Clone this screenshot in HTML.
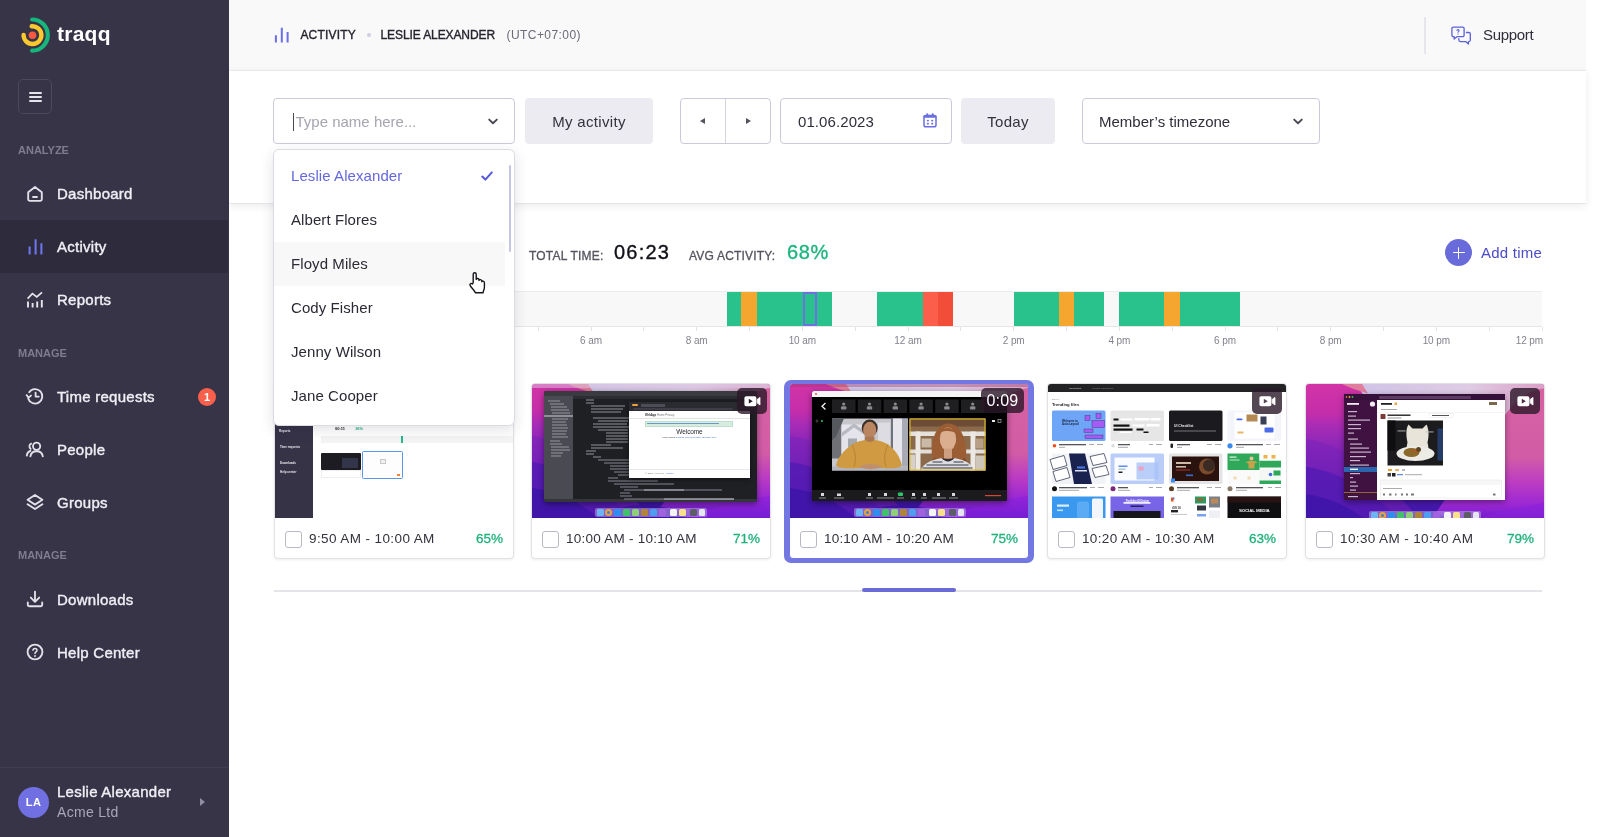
<!DOCTYPE html>
<html lang="en">
<head>
<meta charset="utf-8">
<title>Traqq – Activity</title>
<style>
*{box-sizing:border-box;margin:0;padding:0}
html,body{width:1600px;height:837px;overflow:hidden;background:#fff}
body{font-family:"Liberation Sans",Arial,sans-serif;color:#2b2a35;position:relative;will-change:transform}
.abs{position:absolute}
/* sidebar */
#sb{position:absolute;left:0;top:0;width:229px;height:837px;background:#373448}
#sb .logo-t{position:absolute;left:57px;top:22px;font-size:21px;font-weight:700;color:#fff;line-height:24px;letter-spacing:.25px}
#sb .ham{position:absolute;left:18px;top:79px;width:34px;height:35px;border:1px solid #4c495d;border-radius:5px}
#sb .ham i{position:absolute;left:9.500px;width:13.500px;height:2px;background:#e4e3ea;border-radius:1px}
#sb .sec{position:absolute;left:18px;font-size:11px;font-weight:700;color:#7f7d8d;letter-spacing:0;line-height:14px}
#sb .it{position:absolute;left:0;width:229px;height:53px}
#sb .it.act{background:#2e2b3c;width:228px}
#sb .it span{position:absolute;left:57px;top:17px;font-size:15px;line-height:19px;color:#efeef4;letter-spacing:.26px;-webkit-text-stroke:.4px #efeef4}
#sb .it svg{position:absolute;left:25px;top:16px;width:20px;height:20px}
#sb .badge{position:absolute;left:198px;top:18px;width:18px;height:18px;border-radius:9px;background:#f9604c;color:#fff;font-size:11px;font-weight:700;text-align:center;line-height:18px}
#sb .user{position:absolute;left:0;top:767px;width:229px;height:70px;border-top:1px solid #403d52}
#sb .av{position:absolute;left:18px;top:19px;width:31px;height:31px;border-radius:16px;background:#7170e2;color:#fff;font-size:11px;font-weight:700;text-align:center;line-height:31px;letter-spacing:.3px}
/* topbar */
#tb{position:absolute;left:229px;top:0;width:1357px;height:71px;background:#f9f9f9;border-bottom:1px solid #ededf0}
#tb .bc{position:absolute;top:28px;font-size:12px;line-height:15px;font-weight:400;-webkit-text-stroke:.35px #24232e;color:#24232e;letter-spacing:.2px;white-space:nowrap}
/* filter panel */
#fp{position:absolute;left:229px;top:71px;width:1357px;height:133px;background:#fff;border-bottom:1px solid #e6e6ea;box-shadow:0 2px 8px rgba(40,40,60,.09)}
.ctl{position:absolute;top:98px;height:46px;border-radius:4px;font-size:15px;line-height:48px;white-space:nowrap;letter-spacing:0}
.ctl.in{border:1px solid #cbcada;background:#fff;line-height:46px}
.ctl.btn{background:#ecebf1;color:#33323d;text-align:center;letter-spacing:.34px}
/* dropdown */
#dd{position:absolute;left:273px;top:149px;width:242px;height:277px;background:#fff;border:1px solid #dcdbe3;border-radius:6px;box-shadow:0 4px 14px rgba(30,30,60,.13)}
#dd .o{position:absolute;left:0;width:231px;height:44px;font-size:15px;line-height:44px;padding-left:17px;color:#2b2a35;letter-spacing:.08px}
#dd .o.h{background:#f8f8f8}
#dd .o.s{color:#6468dc}
/* stats */
.st-l{position:absolute;font-size:12px;line-height:14px;color:#55545f;letter-spacing:.2px;white-space:nowrap;-webkit-text-stroke:.3px #55545f}
.st-v{position:absolute;font-size:20px;line-height:24px;white-space:nowrap;letter-spacing:.3px;-webkit-text-stroke:.35px}
/* timeline */
#tl{position:absolute;left:274px;top:291px;width:1268px;height:36px;background:#f8f8f8;border-top:1px solid #ececec;border-bottom:1px solid #e6e6e6}
#tl b{position:absolute;top:0;height:34px;display:block}
.g{background:#2ac28c}.y{background:#f5a62e}.r{background:#fb5f4b}.r2{background:#f24d38}
.tk{position:absolute;top:327px;width:1px;height:4px;background:#e3e3e3}
.tlb{position:absolute;top:334px;font-size:10px;line-height:13px;letter-spacing:-.1px;color:#83828c;white-space:nowrap;width:60px;margin-left:-30px;text-align:center}
/* cards */
.cd{position:absolute;top:383px;width:240px;height:176px;background:#fff;border:1px solid #e2e2e6;border-radius:4px;box-shadow:0 1px 3px rgba(0,0,0,.08);overflow:hidden}
.cd .im{position:absolute;left:0;top:0;width:238px;height:134px;overflow:hidden}
.cd .cb{position:absolute;left:10px;top:147px;width:17px;height:17px;border:1.5px solid #b9b8c4;border-radius:3px;background:#fff}
.cd .tm{position:absolute;left:34px;top:146px;font-size:13.5px;line-height:18px;color:#33323d;letter-spacing:.2px;white-space:nowrap}
.cd .pc{position:absolute;right:10px;top:146px;font-size:13.5px;line-height:18px;color:#1fb27b;font-weight:400;letter-spacing:0;-webkit-text-stroke:.3px #1fb27b}
.cd .vid{position:absolute;right:4px;top:4px;width:30px;height:25px;border-radius:5px;background:rgba(45,25,45,.78)}
</style>
</head>
<body>
<div id="sb">
  <svg class="abs" style="left:16px;top:14px" width="36" height="42" viewBox="0 0 36 42">
    <path d="M16.2 5.500 A15.6 15.6 0 0 1 16.2 36.700" fill="none" stroke="#16b67c" stroke-width="4.2" stroke-linecap="round"/>
    <path d="M15.7 12.240 A8.9 8.9 0 1 1 7.600 20.900" fill="none" stroke="#fbc92d" stroke-width="4.4" stroke-linecap="round"/>
    <circle cx="16.5" cy="21.2" r="3.8" fill="#f9593f"/>
  </svg>
  <div class="logo-t">traqq</div>
  <div class="ham"><i style="top:12px"></i><i style="top:16px"></i><i style="top:20px"></i></div>

  <div class="sec" style="top:143px">ANALYZE</div>
  <div class="it" style="top:167px">
    <svg style="top:17px" viewBox="0 0 20 20" fill="none" stroke="#e2e1ea" stroke-width="1.85" stroke-linejoin="round" stroke-linecap="round"><path d="M3.2 8.2 L10 3 L16.8 8.2 V15.2 A1.6 1.6 0 0 1 15.2 16.8 H4.8 A1.6 1.6 0 0 1 3.2 15.2 Z"/><path d="M8 13 H12" stroke-width="1.8"/></svg>
    <span>Dashboard</span></div>
  <div class="it act" style="top:220px">
    <svg viewBox="0 0 20 20" fill="none" stroke="#6e78f0" stroke-width="2" stroke-linecap="butt"><path d="M4.6 10.4 V18.5 M10.6 3.3 V18.5 M16.400 7.3 V18.5"/></svg>
    <span>Activity</span></div>
  <div class="it" style="top:273px">
    <svg viewBox="0 0 20 20" fill="none" stroke="#e6e5ee" stroke-width="1.7" stroke-linecap="butt" stroke-linejoin="miter"><path d="M3 12.5 V18.5 M7.6 14 V18.5 M12.2 12.5 V18.5 M16.8 11 V18.5" stroke-width="1.9"/><path d="M2.6 9.6 L7.4 4.6 L11.8 8 L17 3.4"/></svg>
    <span>Reports</span></div>

  <div class="sec" style="top:346px">MANAGE</div>
  <div class="it" style="top:370px">
    <svg viewBox="0 0 20 20" fill="none" stroke="#e2e1ea" stroke-width="1.85" stroke-linecap="round" stroke-linejoin="round"><path d="M4.2 6.2 A7.2 7.2 0 1 1 3.2 12.4"/><path d="M1.6 9.2 L3.6 11.6 L6 9.6"/><path d="M10.6 6.6 V10.6 H13.8"/></svg>
    <span>Time requests</span><div class="badge">1</div></div>
  <div class="it" style="top:423px">
    <svg viewBox="0 0 20 20" fill="none" stroke="#e2e1ea" stroke-width="1.85" stroke-linecap="round" stroke-linejoin="round"><circle cx="11.6" cy="7.2" r="3.6"/><path d="M5.4 17.4 C6 13.6 8.6 12.2 11.6 12.2 C14.6 12.2 17.2 13.6 17.8 17.4"/><path d="M6.2 4.6 C4.2 5.4 3.8 8.2 5.6 9.8 M1.8 16.6 C2 14 3.4 12.4 5.4 11.8"/></svg>
    <span>People</span></div>
  <div class="it" style="top:476px">
    <svg viewBox="0 0 20 20" fill="none" stroke="#e2e1ea" stroke-width="1.85" stroke-linecap="round" stroke-linejoin="round"><path d="M10 3 L17.4 7.8 L10 12.6 L2.6 7.8 Z"/><path d="M2.6 12.2 L10 17 L17.4 12.2"/></svg>
    <span>Groups</span></div>

  <div class="sec" style="top:548px">MANAGE</div>
  <div class="it" style="top:573px">
    <svg viewBox="0 0 20 20" fill="none" stroke="#e2e1ea" stroke-width="1.85" stroke-linecap="round" stroke-linejoin="round"><path d="M10 2.6 V12.6 M5.8 8.6 L10 12.8 L14.2 8.6"/><path d="M2.8 13.4 V15.4 A1.8 1.8 0 0 0 4.6 17.2 H15.4 A1.8 1.8 0 0 0 17.2 15.4 V13.4"/></svg>
    <span>Downloads</span></div>
  <div class="it" style="top:626px">
    <svg viewBox="0 0 20 20" fill="none" stroke="#e2e1ea" stroke-width="1.85" stroke-linecap="round" stroke-linejoin="round"><circle cx="10" cy="10" r="7.4"/><path d="M8 8.2 C8 5.8 12 5.8 12 8.2 C12 9.8 10 9.8 10 11.4" stroke-width="1.5"/><path d="M10 13.9 V14" stroke-width="1.9"/></svg>
    <span>Help Center</span></div>

  <div class="user">
    <div class="av">LA</div>
    <div class="abs" style="left:57px;top:14px;font-size:15px;line-height:19px;color:#efeef4;letter-spacing:.26px;-webkit-text-stroke:.4px #efeef4;white-space:nowrap">Leslie Alexander</div>
    <div class="abs" style="left:57px;top:35px;font-size:14px;line-height:18px;color:#a9a7b8;letter-spacing:.3px;white-space:nowrap">Acme Ltd</div>
    <div class="abs" style="left:200px;top:30px;width:0;height:0;border-left:5px solid #8f8da2;border-top:4px solid transparent;border-bottom:4px solid transparent"></div>
  </div>
</div>

<div id="tb">
  <svg class="abs" style="left:44px;top:26px" width="18" height="19" viewBox="0 0 18 19" fill="none" stroke="#6a6fe6" stroke-width="2"><path d="M2.9 9.2 V16.6 M8.8 1.7 V16.6 M14.6 6 V16.6"/></svg>
  <div class="bc" style="left:71.400px">ACTIVITY</div>
  <div class="abs" style="left:138px;top:33px;width:4px;height:4px;border-radius:2px;background:#cfd0e2"></div>
  <div class="bc" style="left:151.500px;letter-spacing:-.1px">LESLIE ALEXANDER</div>
  <div class="bc" style="left:277.500px;-webkit-text-stroke:0;color:#6a6975;letter-spacing:.43px">(UTC+07:00)</div>
  <div class="abs" style="left:1195.300px;top:17px;width:1.600px;height:37px;background:#e6e6ee"></div>
  <svg class="abs" style="left:1221px;top:24.500px" width="22.600" height="20.700" viewBox="0 0 24 22" fill="none" stroke="#5c62dc" stroke-width="1.4" stroke-linejoin="round" stroke-linecap="round">
    <path d="M3.6 2.2 H13.4 A1.6 1.6 0 0 1 15 3.8 V10.8 A1.6 1.6 0 0 1 13.4 12.4 H7.4 L4.4 15 V12.4 H3.6 A1.6 1.6 0 0 1 2 10.8 V3.8 A1.6 1.6 0 0 1 3.6 2.2 Z"/>
    <path d="M17.4 8 H20 A1.6 1.6 0 0 1 21.6 9.6 V16 A1.6 1.6 0 0 1 20 17.600 H19.6 V20.2 L16.6 17.600 H11 A1.6 1.6 0 0 1 9.400 16 V14.6"/>
    <path d="M7.4 5.800 C7.4 4.400 9.700 4.400 9.700 5.800 C9.700 6.700 8.500 6.800 8.500 7.700 M8.500 9.500 V9.600" stroke-width="1.2"/>
  </svg>
  <div class="abs" style="left:1254px;top:26px;font-size:15px;line-height:18px;color:#2f2e3a;letter-spacing:-.3px">Support</div>
</div>

<div id="fp"></div>
<div class="ctl in" style="left:273px;width:242px">
  <div class="abs" style="left:18.500px;top:14px;width:1.500px;height:18px;background:#4a4956"></div>
  <span class="abs" style="left:21.500px;top:0;color:#a6a5b0">Type name here...</span>
  <svg class="abs" style="left:213px;top:18px" width="12" height="9" viewBox="0 0 12 9" fill="none" stroke="#4a4956" stroke-width="1.9" stroke-linecap="round" stroke-linejoin="round"><path d="M2.2 2.600 L6 6.300 L9.800 2.600"/></svg>
</div>
<div class="ctl btn" style="left:525px;width:128px">My activity</div>
<div class="ctl in" style="left:680px;width:91px">
  <div class="abs" style="left:44px;top:0;width:1px;height:44px;background:#d4d3de"></div>
  <div class="abs" style="left:19px;top:19px;width:0;height:0;border-right:5px solid #55545f;border-top:3.500px solid transparent;border-bottom:3.500px solid transparent"></div>
  <div class="abs" style="left:65px;top:19px;width:0;height:0;border-left:5px solid #55545f;border-top:3.500px solid transparent;border-bottom:3.500px solid transparent"></div>
</div>
<div class="ctl in" style="left:780px;width:172px">
  <span class="abs" style="left:17px;top:0;color:#2f2e3a;letter-spacing:.09px">01.06.2023</span>
  <svg class="abs" style="left:141px;top:13px" width="16" height="17" viewBox="0 0 16 17" fill="none" stroke="#6a6ee2" stroke-width="1.5" stroke-linejoin="round" stroke-linecap="round">
    <rect x="2" y="3.400" width="12" height="11.400" rx="1.800"/><path d="M2.400 4.600 H13.600" stroke-width="2.200"/><path d="M5.300 2.300 V3 M10.700 2.300 V3" stroke-width="2"/><path d="M5.700 8.600 h.4 M10 8.600 h.4 M5.700 11.700 h.4 M10 11.700 h.4" stroke-width="1.800"/>
  </svg>
</div>
<div class="ctl btn" style="left:961px;width:94px">Today</div>
<div class="ctl in" style="left:1082px;width:238px">
  <span class="abs" style="left:16px;top:0;color:#2f2e3a">Member’s timezone</span>
  <svg class="abs" style="left:209px;top:18px" width="12" height="9" viewBox="0 0 12 9" fill="none" stroke="#4a4956" stroke-width="1.9" stroke-linecap="round" stroke-linejoin="round"><path d="M2.2 2.600 L6 6.300 L9.800 2.600"/></svg>
</div>

<div class="st-l" style="left:529px;top:249px">TOTAL TIME:</div>
<div class="st-v" style="left:614px;top:240px;color:#111018;letter-spacing:1.2px">06:23</div>
<div class="st-l" style="left:689px;top:249px">AVG ACTIVITY:</div>
<div class="st-v" style="left:787px;top:240px;color:#1db57e;letter-spacing:.6px">68%</div>
<div class="abs" style="left:1445px;top:239px;width:27px;height:27px;border-radius:14px;background:#696bda"><i class="abs" style="left:7.500px;top:12.600px;width:12px;height:1.800px;background:#fff;border-radius:1px"></i><i class="abs" style="left:12.600px;top:7.500px;width:1.800px;height:12px;background:#fff;border-radius:1px"></i></div>
<div class="abs" style="left:1481px;top:243.600px;font-size:15px;line-height:18px;color:#4a4bc7;letter-spacing:.23px;white-space:nowrap">Add time</div>
<div id="tl"><b class="g" style="left:452.5px;width:14.8px"></b><b class="y" style="left:467.3px;width:15.8px"></b><b class="g" style="left:483.1px;width:74.6px"></b><b class="g" style="left:603.4px;width:45.4px"></b><b class="r" style="left:648.8px;width:15.5px"></b><b class="r2" style="left:664.3px;width:14.7px"></b><b class="g" style="left:739.9px;width:45.0px"></b><b class="y" style="left:784.9px;width:15.3px"></b><b class="g" style="left:800.2px;width:29.7px"></b><b class="g" style="left:845.2px;width:45.0px"></b><b class="y" style="left:890.2px;width:15.8px"></b><b class="g" style="left:906.0px;width:60.0px"></b><b style="left:528.5px;width:14.5px;border:2px solid #6f70e2;background:transparent"></b></div>
<i class="tk" style="left:326.3px"></i>
<i class="tk" style="left:379.2px"></i>
<i class="tk" style="left:432.0px"></i>
<i class="tk" style="left:484.8px"></i>
<i class="tk" style="left:537.7px"></i>
<i class="tk" style="left:590.5px"></i>
<i class="tk" style="left:643.3px"></i>
<i class="tk" style="left:696.2px"></i>
<i class="tk" style="left:749.0px"></i>
<i class="tk" style="left:801.8px"></i>
<i class="tk" style="left:854.7px"></i>
<i class="tk" style="left:907.5px"></i>
<i class="tk" style="left:960.3px"></i>
<i class="tk" style="left:1013.2px"></i>
<i class="tk" style="left:1066.0px"></i>
<i class="tk" style="left:1118.8px"></i>
<i class="tk" style="left:1171.7px"></i>
<i class="tk" style="left:1224.5px"></i>
<i class="tk" style="left:1277.3px"></i>
<i class="tk" style="left:1330.2px"></i>
<i class="tk" style="left:1383.0px"></i>
<i class="tk" style="left:1435.8px"></i>
<i class="tk" style="left:1488.7px"></i>
<i class="tk" style="left:1541.5px"></i>
<div class="tlb" style="left:591.0px">6 am</div>
<div class="tlb" style="left:696.7px">8 am</div>
<div class="tlb" style="left:802.3px">10 am</div>
<div class="tlb" style="left:908.0px">12 am</div>
<div class="tlb" style="left:1013.7px">2 pm</div>
<div class="tlb" style="left:1119.3px">4 pm</div>
<div class="tlb" style="left:1225.0px">6 pm</div>
<div class="tlb" style="left:1330.7px">8 pm</div>
<div class="tlb" style="left:1436.3px">10 pm</div>
<div class="tlb" style="left:1483px;margin-left:0;text-align:right">12 pm</div>
<svg width="0" height="0" style="position:absolute">
  <defs>
    <linearGradient id="wpR" x1="0" y1="0" x2="0" y2="1"><stop offset="0" stop-color="#d662a2"/><stop offset=".5" stop-color="#d25ca6"/><stop offset=".68" stop-color="#bd3dc2"/><stop offset=".85" stop-color="#9a27d4"/><stop offset="1" stop-color="#5a18c6"/></linearGradient>
    <linearGradient id="wpL" x1="0" y1="0" x2="0" y2="1"><stop offset="0" stop-color="#d234a6"/><stop offset=".2" stop-color="#c52eaa"/><stop offset=".3" stop-color="#a82cb6"/><stop offset=".42" stop-color="#8f27b8"/><stop offset=".56" stop-color="#7421b8"/><stop offset=".72" stop-color="#591cb4"/><stop offset=".88" stop-color="#4317ac"/><stop offset="1" stop-color="#33119c"/></linearGradient>
    <linearGradient id="wpS" x1="0" y1="0" x2="1" y2="0"><stop offset="0" stop-color="#cfc3e6"/><stop offset=".6" stop-color="#dfcbe4"/><stop offset="1" stop-color="#dba0c6"/></linearGradient>
    <symbol id="wp" viewBox="0 0 238 134" preserveAspectRatio="none">
      <rect width="238" height="134" fill="url(#wpL)"/>
      <path d="M50 0 H238 V40 L60 14 Z" fill="url(#wpS)"/>
      <path d="M36 0 L56 0 L62 9 C52 6 44 4 36 0Z" fill="#e07c9c"/>
      <path d="M238 4 C225 6 214 12 205 22 C190 40 170 70 120 134 H238 Z" fill="url(#wpR)"/>
      <path d="M0 52 C40 58 70 80 120 134 H0 Z" fill="#7a22b8" opacity=".55"/>
      <path d="M0 78 C40 84 70 104 100 134 H0 Z" fill="#4f1ab2" opacity=".7"/>
      <path d="M0 104 C30 108 50 120 66 134 H0 Z" fill="#3c14a6" opacity=".8"/>
      <path d="M60 134 C90 118 130 116 160 134 Z" fill="#3a13a8" opacity=".8"/>
      <path d="M238 112 C210 116 180 124 150 134 H238 Z" fill="#8a22dc" opacity=".6"/>
    </symbol>
    <symbol id="dock" viewBox="0 0 112 9">
      <rect x="0" y="0" width="112" height="9" rx="2" fill="#b9a3e6" opacity=".55"/>
      <rect x="2" y="1" width="7" height="7" rx="1.500" fill="#6db4f2"/><circle cx="13.500" cy="4.500" r="3.500" fill="#e8a33a"/><circle cx="13.500" cy="4.500" r="1.500" fill="#3f7de0"/>
      <rect x="19" y="1" width="7" height="7" rx="1.500" fill="#2f8df0"/><rect x="28" y="1" width="7" height="7" rx="1.500" fill="#3fc26a"/><rect x="37" y="1" width="7" height="7" rx="1.500" fill="#8fcf7a"/>
      <rect x="46" y="1" width="7" height="7" rx="1.500" fill="#b08538"/><rect x="55" y="1" width="7" height="7" rx="1.500" fill="#4f9df0"/><rect x="64" y="1" width="7" height="7" rx="1.500" fill="#a262e0"/>
      <rect x="75" y="1" width="7" height="7" rx="1.500" fill="#f4f4f6"/><rect x="84" y="1" width="7" height="7" rx="1.500" fill="#f7e08a"/>
      <rect x="95" y="1" width="7" height="7" rx="1.500" fill="#5d5d66"/><rect x="104" y="1" width="6" height="7" rx="1.500" fill="#e6e6ee"/>
    </symbol>
    <symbol id="cam" viewBox="0 0 30 26">
      <rect width="30" height="26" rx="5" fill="#2a1828" opacity=".8"/>
      <path d="M9.200 8.200 H17.600 A1.800 1.800 0 0 1 19.400 10 V16.400 A1.800 1.800 0 0 1 17.600 18.200 H9.200 A1.800 1.800 0 0 1 7.400 16.400 V10 A1.800 1.800 0 0 1 9.200 8.200 Z M11.800 10.800 V15.600 L15.800 13.200 Z" fill="#fff" fill-rule="evenodd"/>
      <path d="M20.200 11.400 L23 9.400 V17 L20.200 15 Z" fill="#fff" stroke="#fff" stroke-width=".8" stroke-linejoin="round"/>
    </symbol>
  </defs>
</svg>

<!-- card 1 -->
<div class="cd" style="left:274px">
  <div class="im" style="background:#fff">
    <div class="abs" style="left:0;top:0;width:38px;height:134px;background:#363347"></div>
    <div class="abs" style="left:46px;top:52px;width:192px;height:7px;background:#f4f4f5"></div>
    <div class="abs" style="left:126px;top:52px;width:2px;height:7px;background:#25b78d"></div>
    <div class="abs" style="left:60px;top:42px;font-size:4px;line-height:5px;font-weight:700;color:#222;white-space:nowrap">00:11 <span style="color:#26b584;margin-left:9px">36%</span></div>
    <div class="abs" style="left:4px;top:45px;font-size:3px;line-height:4px;font-weight:700;color:#e8e8ee;white-space:nowrap">Reports</div>
    <div class="abs" style="left:5px;top:61px;font-size:3px;line-height:4px;font-weight:700;color:#e8e8ee;white-space:nowrap">Time requests</div>
    <div class="abs" style="left:5px;top:77px;font-size:3px;line-height:4px;font-weight:700;color:#e8e8ee;white-space:nowrap">Downloads</div>
    <div class="abs" style="left:5px;top:86px;font-size:3px;line-height:4px;font-weight:700;color:#e8e8ee;white-space:nowrap">Help center</div>
    <div class="abs" style="left:46px;top:69px;width:40px;height:17px;background:#1c1c22;border-radius:1px"><i class="abs" style="left:21px;top:5px;width:16px;height:10px;background:#33364a"></i></div>
    <div class="abs" style="left:46px;top:86px;width:40px;height:8px;background:#fff;border:.5px solid #eee"></div>
    <div class="abs" style="left:87px;top:67px;width:41px;height:28px;background:#fdfdfd;border:1px solid #5a97ea;border-radius:1.500px"><i class="abs" style="left:17px;top:7px;width:6px;height:5px;border:.5px solid #c8c8c8;background:#f0f0f0"></i><i class="abs" style="left:34px;top:22px;width:3px;height:1.500px;background:#f0843a"></i></div>
  </div>
  <div class="cb"></div><div class="tm" style="letter-spacing:.4px">9:50 AM - 10:00 AM</div><div class="pc">65%</div>
</div>

<!-- card 2 -->
<div class="cd" style="left:531px">
  <div class="im">
    <svg class="abs" style="left:0;top:0" width="238" height="134"><use href="#wp" width="238" height="134"/></svg>
    <div class="abs" style="left:0;top:0;width:238px;height:4px;background:rgba(220,200,230,.5)"></div>
    <div class="abs" style="left:12px;top:7px;width:213px;height:111px;background:#1f2024;border-radius:2px;box-shadow:0 2px 6px rgba(0,0,0,.45);overflow:hidden">
      <div class="abs" style="left:0;top:0;width:213px;height:5px;background:#3a3b40"></div>
      <div class="abs" style="left:0;top:5px;width:29px;height:104px;background:#4a4b52"></div>
      <div class="abs" style="left:29px;top:5px;width:184px;height:3px;background:#2c2d32"></div>
      <div class="abs" style="left:0;top:108px;width:213px;height:3px;background:#35363b"></div>
      <div class="abs" style="left:0;top:24px;width:29px;height:2px;background:#8d8e96"></div>
      <svg class="abs" style="left:0;top:0" width="213" height="111" fill="none" stroke-width="1" opacity=".75">
        <path d="M4 10h12M6 13h14M7 16h16M7 19h18M8 22h18M8 28h16M8 31h14M8 34h15M8 37h16M8 40h15M8 43h14M8 46h16M6 50h10M6 53h12M7 56h18M7 59h19M7 62h12M7 65h10" stroke="#c9cad2" stroke-width=".8"/>
        <path d="M42 9h8M42 12h8M47 15h34M47 18h32M47 21h30M49 27h36M54 30h30M49 33h34M49 36h36M54 39h30M62 42h22M62 45h22M62 48h22M62 51h22M47 54h20M47 57h32M42 60h10M42 63h8M49 66h8" stroke="#b9bac4"/>
        <path d="M54 69h34M60 72h30M66 75h26M66 78h24M70 81h22M74 84h20M64 87h10M64 90h50M70 93h60M76 96h18M80 99h98M76 102h10M76 105h12M80 108h110" stroke="#a9aab6"/>
        <path d="M100 99h40M120 108h70" stroke="#e6e6ee"/>
      </svg>
    </div>
    <div class="abs" style="left:97px;top:18px;width:121px;height:76px;background:#fff;box-shadow:0 1px 5px rgba(0,0,0,.5);overflow:hidden">
      <div class="abs" style="left:0;top:0;width:121px;height:9px;background:#2a2b30"></div>
      <div class="abs" style="left:3px;top:2px;width:6px;height:2px;background:#e8a13c;border-radius:1px"></div>
      <div class="abs" style="left:12px;top:1.500px;width:24px;height:3px;background:#4d4e55"></div>
      <div class="abs" style="left:4px;top:5.500px;width:100px;height:2.500px;background:#3e3f46;border-radius:1px"></div>
      <div class="abs" style="left:16px;top:11px;font-size:2.800px;line-height:4px;color:#333;white-space:nowrap;font-weight:700">WebApp <span style="font-weight:400;color:#777">Home Privacy</span></div>
      <div class="abs" style="left:0;top:16px;width:121px;height:.5px;background:#e4e4e4"></div>
      <div class="abs" style="left:16px;top:18.500px;width:88px;height:6px;background:#d5ecdf;border:.5px solid #bfe0cd"></div>
      <div class="abs" style="left:18px;top:21px;width:72px;height:1px;background:#4f86c6;opacity:.8"></div>
      <div class="abs" style="left:0;top:25px;width:121px;text-align:center;font-size:6.500px;line-height:9px;color:#2a2a2a;letter-spacing:-.1px">Welcome</div>
      <div class="abs" style="left:0;top:34px;width:121px;text-align:center;font-size:2.400px;line-height:4px;color:#3b6fd0;white-space:nowrap"><span style="color:#333">Learn about</span> building Web apps with ASP.NET Core</div>
      <div class="abs" style="left:0;top:67px;width:121px;height:.5px;background:#e8e8e8"></div>
      <div class="abs" style="left:16px;top:70px;font-size:2.400px;line-height:3px;color:#777;white-space:nowrap">© 2023 - WebApp - <span style="color:#3b6fd0">Privacy</span></div>
    </div>
    <svg class="abs" style="left:63px;top:124px" width="112" height="9"><use href="#dock" width="112" height="9"/></svg>
    <svg class="abs" style="left:205px;top:4px" width="30" height="26"><use href="#cam" width="30" height="26"/></svg>
  </div>
  <div class="cb"></div><div class="tm" style="letter-spacing:.25px">10:00 AM - 10:10 AM</div><div class="pc">71%</div>
</div>
<!-- card 3 (selected) -->
<div class="abs" style="left:784px;top:380px;width:250px;height:183px;border-radius:7px;background:#7277e2"></div>
<div class="cd" style="left:789px;border-color:#7277e2;box-shadow:none;border-radius:4px">
  <div class="im">
    <svg class="abs" style="left:0;top:0" width="238" height="134"><use href="#wp" width="238" height="134"/></svg>
    <div class="abs" style="left:0;top:0;width:238px;height:3px;background:rgba(150,60,110,.4)"></div>
    <div class="abs" style="left:22px;top:7px;width:195px;height:110px;background:#000;border-radius:2px;box-shadow:0 2px 6px rgba(0,0,0,.45);overflow:hidden">
      <div class="abs" style="left:0;top:0;width:195px;height:6px;background:#f4f4f4"></div>
      <div class="abs" style="left:2.500px;top:2px;width:2px;height:2px;border-radius:1px;background:#f0544a"></div>
      <div class="abs" style="left:0;top:99px;width:195px;height:11px;background:#1b1b1d"></div>
      <svg class="abs" style="left:0;top:0" width="195" height="110">
        <path d="M13.500 12 L10 15.200 L13.500 18.400" fill="none" stroke="#f2f2f2" stroke-width="1.300"/>
        <g fill="#1f1f21"><rect x="20" y="8.500" width="23.500" height="13.500"/><rect x="45.800" y="8.500" width="23.500" height="13.500"/><rect x="71.600" y="8.500" width="23.500" height="13.500"/><rect x="97.400" y="8.500" width="23.500" height="13.500"/><rect x="123.200" y="8.500" width="23.500" height="13.500"/><rect x="149" y="8.500" width="23.500" height="13.500"/></g>
        <g fill="#8a8a8e"><circle cx="31.700" cy="13" r="1.600"/><rect x="29" y="15.200" width="5.400" height="3.400" rx="1.200"/><circle cx="57.500" cy="13" r="1.600"/><rect x="54.800" y="15.200" width="5.400" height="3.400" rx="1.200"/><circle cx="83.300" cy="13" r="1.600"/><rect x="80.600" y="15.200" width="5.400" height="3.400" rx="1.200"/><circle cx="109.100" cy="13" r="1.600"/><rect x="106.400" y="15.200" width="5.400" height="3.400" rx="1.200"/><circle cx="134.900" cy="13" r="1.600"/><rect x="132.200" y="15.200" width="5.400" height="3.400" rx="1.200"/><circle cx="160.700" cy="13" r="1.600"/><rect x="158" y="15.200" width="5.400" height="3.400" rx="1.200"/></g>
        <!-- left video -->
        <g transform="translate(20,27.500)">
          <rect width="76" height="52" fill="#c6c6cc"/>
          <rect x="0" y="0" width="9" height="40" fill="#6f7176"/><path d="M0 0 L12 0 L4 18 L0 22Z" fill="#55585c"/>
          <rect x="10" y="6" width="22" height="30" fill="#e4e4ea"/><path d="M10 14 L22 5 L32 12 V16 L22 9 L10 18Z" fill="#b9b9c2"/><rect x="16" y="20" width="9" height="9" fill="#a6a8b0"/>
          <rect x="46" y="4" width="12" height="34" fill="#dcdce2"/>
          <rect x="59" y="0" width="2" height="48" fill="#70727a"/><rect x="61" y="0" width="9" height="48" fill="#e6e6ec"/><rect x="70" y="0" width="6" height="48" fill="#a9abb4"/>
          <rect x="0" y="48" width="76" height="4" fill="#b4b4bc"/>
          <ellipse cx="37.700" cy="9.500" rx="8" ry="8.500" fill="#3a2e28"/>
          <ellipse cx="37.700" cy="11.500" rx="6.600" ry="8.200" fill="#b98661"/>
          <path d="M33 18 H42.500 V24 H33Z" fill="#a97852"/>
          <path d="M4 47 C6 38 12 32 20 26 C25 23 30 22 33 21.500 C36 24 40 24 42.500 21.500 C47 22 52 23.500 56 26 C63 31 68 38 70 47 C66 50.500 58 50 50 49.500 H26 C18 50 8 50.500 4 47Z" fill="#cf9a42"/>
          <path d="M20 26 C24 34 24 42 22 48 M56 26 C52 34 52 42 54 48" stroke="#b5822f" stroke-width="1" fill="none"/>
          <path d="M27 48 C32 44.500 44 44.500 50 48 C45 51.500 32 51.500 27 48Z" fill="#c0906c"/>
        </g>
        <!-- right video -->
        <g transform="translate(97.500,27.500)">
          <rect width="76" height="52" fill="#8b6a4c"/>
          <rect x="0" y="0" width="76" height="8" fill="#6c4c34"/>
          <rect x="0" y="13" width="76" height="4.500" fill="#e4e0dc"/><rect x="0" y="31" width="76" height="4" fill="#e2deda"/>
          <rect x="6" y="13" width="5" height="39" fill="#ece8e4"/><rect x="61" y="13" width="5" height="39" fill="#ece8e4"/>
          <rect x="12" y="20" width="10" height="9" fill="#c9b9a6"/><rect x="66" y="20" width="8" height="10" fill="#b79f86"/><rect x="0" y="36" width="6" height="16" fill="#d6d0c8"/><rect x="66" y="37" width="10" height="15" fill="#cfc6ba"/>
          <path d="M23 44 C20 26 25 5 39 5 C53 5 59 26 56 46 C50 50 30 50 23 44Z" fill="#9a5d34"/>
          <path d="M26 40 C22 44 24 48 28 49 M54 40 C58 44 56 48 52 49" stroke="#7f4726" stroke-width="2" fill="none"/>
          <ellipse cx="38.500" cy="20.500" rx="8.200" ry="11.500" fill="#dcae90"/>
          <path d="M31 14 C33 8 44 8 46.500 15 C42 12 36 12 31 14Z" fill="#9a5d34"/>
          <rect x="34.500" y="30" width="8" height="10" fill="#cf9f82"/>
          <path d="M11 52 C14 44 24 41 32 39.500 C36 43 41 43 45 39.500 C53 41 62 44 65 52Z" fill="#dddde2"/>
          <path d="M13 49.500 H63 M17 46.500 H59 M23 43.500 H33 M44 43.500 H54" stroke="#3a3a44" stroke-width="1.100" fill="none"/>
          <path d="M32 39.500 C36 44 41 44 45 39.500 C41 41 36 41 32 39.500Z" fill="#2e2e36"/>
          <rect x=".5" y=".5" width="75" height="51" fill="none" stroke="#e0bd2a" stroke-width="1.100"/>
        </g>
        <g fill="#d8d8dc"><rect x="9" y="102" width="3" height="3"/><rect x="25" y="102.500" width="4" height="2.500"/><rect x="56" y="102" width="3" height="3"/><rect x="72" y="102" width="3" height="3"/><rect x="100" y="102" width="3" height="3"/><rect x="111" y="102" width="3" height="3"/><rect x="125" y="102" width="3" height="3"/><rect x="140" y="102" width="3" height="3"/></g>
        <rect x="86" y="101.500" width="5" height="3.500" rx="1" fill="#2fc46a"/>
        <g fill="#8c8c92"><rect x="7" y="106.500" width="7" height="1"/><rect x="22" y="106.500" width="10" height="1"/><rect x="54" y="106.500" width="7" height="1"/><rect x="65" y="106.500" width="17" height="1"/><rect x="85" y="106.500" width="7" height="1"/><rect x="99" y="106.500" width="5" height="1"/><rect x="109" y="106.500" width="6" height="1"/><rect x="120" y="106.500" width="14" height="1"/><rect x="137" y="106.500" width="9" height="1"/></g>
        <rect x="173" y="104" width="16" height="1.200" fill="#d8453a"/>
        <rect x="180" y="29" width="3" height="2" fill="#e8e8e8"/><rect x="186" y="28.500" width="3" height="3" fill="none" stroke="#ccc" stroke-width=".6"/>
        <circle cx="10" cy="30" r="1" fill="#2fc46a"/><circle cx="5" cy="30" r="1" fill="none" stroke="#888" stroke-width=".5"/>
      </svg>
    </div>
    <svg class="abs" style="left:64px;top:124px" width="112" height="9"><use href="#dock" width="112" height="9"/></svg>
    <div class="abs" style="left:191px;top:4px;width:43px;height:25px;border-radius:5px;background:rgba(42,24,40,.8);color:#fff;font-size:16px;line-height:26px;text-align:center;letter-spacing:.2px">0:09</div>
  </div>
  <div class="cb"></div><div class="tm">10:10 AM - 10:20 AM</div><div class="pc">75%</div>
</div>

<!-- card 4 -->
<div class="cd" style="left:1047px">
  <div class="im" style="background:#fff">
    <div class="abs" style="left:0;top:0;width:238px;height:8px;background:#232326"></div>
    <div class="abs" style="left:21px;top:3px;font-size:2.500px;line-height:3px;color:#ddd;white-space:nowrap">Community <span style="color:#888;margin-left:10px">Search Community</span></div>
    <div class="abs" style="left:4px;top:14px;font-size:2.200px;line-height:3px;color:#888;white-space:nowrap">Explore</div>
    <div class="abs" style="left:4px;top:18px;font-size:4.200px;line-height:5px;font-weight:700;color:#222;white-space:nowrap">Trending files</div>
    <svg class="abs" style="left:0;top:0" width="238" height="134">
      <!-- row 1 -->
      <g transform="translate(4,26.500)"><rect width="53.500" height="30.500" rx="1.500" fill="#6fa5f6"/><g fill="#a55cf5" stroke="#3a2a6a" stroke-width=".4"><rect x="33" y="5" width="5" height="5"/><rect x="44" y="3" width="5" height="5"/><rect x="40" y="10" width="12.500" height="7"/><rect x="32" y="18.500" width="9" height="3.500"/><rect x="33" y="24.500" width="18" height="3.500"/></g></g>
      <g transform="translate(62.500,26.500)"><rect width="53.500" height="30.500" rx="1.500" fill="#e6e6e7"/><g fill="#111"><rect x="3" y="8" width="5" height="2"/><rect x="3" y="14" width="16" height="2.200"/><rect x="3" y="18" width="19" height="2.200"/><rect x="26" y="18" width="7" height="2"/><rect x="33" y="21" width="5" height="1.500"/></g><g fill="#fff"><rect x="10" y="8" width="12" height="2"/><rect x="24" y="7.500" width="15" height="2.500"/><rect x="40" y="7.500" width="10" height="2.500"/><rect x="22" y="14" width="12" height="2"/><rect x="36" y="13.500" width="13" height="2.500"/><rect x="9" y="21" width="12" height="1.600"/></g></g>
      <g transform="translate(121,26.500)"><rect width="53.500" height="30.500" rx="1.500" fill="#1b1b1f"/><rect x="5" y="20" width="42" height="1" fill="#777"/></g>
      <g transform="translate(179.500,26.500)"><rect width="53.500" height="30.500" rx="1.500" fill="#f3f5fb"/><rect x="7" y="2" width="40" height="26" fill="#fff"/><rect x="19" y="4" width="11" height="7" fill="#b28a52"/><rect x="33" y="6" width="6" height="8" fill="#3a3f55"/><rect x="37" y="17" width="9" height="5" fill="#4a6be8" rx="1"/><rect x="9" y="8" width="6" height="1.800" rx=".9" fill="#4a6be8"/><rect x="10" y="21" width="6" height="2" fill="#e9b56a"/></g>
      <!-- meta 1 -->
      <g fill="#55555c"><rect x="11" y="60" width="27" height="1.300"/><rect x="70" y="60" width="12" height="1.300"/><rect x="129" y="60" width="13" height="1.300"/><rect x="188" y="60" width="27" height="1.300"/></g>
      <g fill="#a8a8ae"><rect x="11" y="62.800" width="6" height="1"/><rect x="70" y="62.800" width="10" height="1"/><rect x="129" y="62.800" width="5" height="1"/><rect x="188" y="62.800" width="8" height="1"/><rect x="41" y="60" width="5" height="1"/><rect x="49" y="60" width="6" height="1"/><rect x="101" y="60" width="4" height="1"/><rect x="108" y="60" width="6" height="1"/><rect x="159" y="60" width="5" height="1"/><rect x="167" y="60" width="6" height="1"/><rect x="218" y="60" width="5" height="1"/><rect x="226" y="60" width="6" height="1"/></g>
      <circle cx="6.500" cy="61.800" r="1.800" fill="#f24e1e"/><circle cx="65" cy="61.800" r="1.800" fill="#ddd"/><rect x="122.500" y="59.500" width="2.500" height="4.500" rx="1" fill="#222"/><circle cx="182" cy="61.800" r="2.600" fill="#3d8bf0"/>
      <!-- row 2 -->
      <g transform="translate(4,69.500)"><rect width="53.500" height="30.500" rx="1.500" fill="#f2f3f7"/><g fill="#fff" stroke="#23283e" stroke-width=".7"><path d="M-2 6 L12 2 L15 12 L1 16Z M1 18 L15 14 L18 24 L4 28Z M38 3 L52 0 L55 9 L41 12Z M40 15 L54 12 L57 21 L43 24Z"/></g><path d="M17 0 H33 L40 30.500 H22Z" fill="#1a2250"/><rect x="25" y="13" width="8" height="2" fill="#4a7be8"/><rect x="23" y="16.500" width="12" height="1.500" fill="#dfe3f5"/></g>
      <g transform="translate(62.500,69.500)"><rect width="53.500" height="30.500" rx="1.500" fill="#b9cdf8"/><rect x="4" y="4" width="40" height="23" fill="#fbfcff"/><rect x="26" y="9" width="22" height="17" fill="#a9c2f6" opacity=".8"/><rect x="8" y="12" width="9" height="1.500" fill="#5b8cf0"/><rect x="8" y="15" width="7" height="1.200" fill="#9bb"/><rect x="8" y="18" width="4" height="1.500" fill="#222"/><rect x="28" y="13" width="5" height="4" fill="#f0a0c0"/></g>
      <g transform="translate(121,69.500)"><rect width="53.500" height="30.500" rx="1.500" fill="#e4e4e6"/><rect x="3" y="3" width="47" height="24.500" fill="#2a130f"/><circle cx="38" cy="13" r="8" fill="#7a4a2a"/><circle cx="40" cy="12" r="6" fill="#3a2a24"/><rect x="7" y="8.500" width="15" height="2" fill="#cdb9a8"/><rect x="7" y="12.500" width="10" height="1.600" fill="#cdb9a8"/><rect x="7" y="16" width="14" height="1" fill="#a33"/><rect x="17" y="21" width="7" height="1.600" fill="#3b6fd0"/><rect x="2" y="25" width="4" height="4" fill="#3d8bf0"/></g>
      <g transform="translate(179.500,69.500)"><rect width="53.500" height="30.500" rx="1.500" fill="#fafafa"/><rect width="32" height="16.500" fill="#2fa85a"/><rect x="32" y="7" width="21.500" height="7" fill="#2fa85a"/><rect x="32" y="0" width="21.500" height="7" fill="#fff"/><rect x="36" y="1.500" width="4" height="3.500" fill="#f0b24a"/><rect x="44" y="1.500" width="4" height="3.500" fill="#f0b24a"/><circle cx="24" cy="5" r="2" fill="#e8c39a"/><path d="M18 9 L21 7.500 H27 L30 9 L27 10 V15 H21 V10Z" fill="#c9a14a"/><rect x="2" y="3" width="7" height="1.200" fill="#dff5e6"/><rect x="2" y="6" width="10" height="1" fill="#bfe8cc"/><rect x="32" y="16" width="21.500" height="11" fill="#f4f7f4"/><rect x="46" y="17" width="7" height="5" fill="#2fa85a"/><circle cx="43" cy="21" r="1.800" fill="#3d6be0"/><rect x="32" y="27" width="21.500" height="3.500" fill="#2fa85a"/><rect x="6" y="23" width="3" height="3" fill="#f3d9b5"/><rect x="20" y="23" width="3" height="3" fill="#f3d9b5"/></g>
      <!-- meta 2 -->
      <g fill="#55555c"><rect x="11" y="103" width="28" height="1.300"/><rect x="70" y="103" width="10" height="1.300"/><rect x="129" y="103" width="22" height="1.300"/><rect x="188" y="103" width="27" height="1.300"/></g>
      <g fill="#a8a8ae"><rect x="11" y="105.800" width="20" height="1"/><rect x="70" y="105.800" width="12" height="1"/><rect x="129" y="105.800" width="13" height="1"/><rect x="188" y="105.800" width="11" height="1"/><rect x="42" y="103" width="5" height="1"/><rect x="50" y="103" width="6" height="1"/><rect x="101" y="103" width="4" height="1"/><rect x="108" y="103" width="6" height="1"/><rect x="159" y="103" width="5" height="1"/><rect x="167" y="103" width="6" height="1"/><rect x="220" y="103" width="4" height="1"/><rect x="227" y="103" width="6" height="1"/></g>
      <circle cx="6.500" cy="104.800" r="2.500" fill="#111"/><circle cx="65" cy="104.800" r="2.500" fill="#7a2a7a"/><circle cx="123.500" cy="104.800" r="2.500" fill="#5a3a22"/><circle cx="182" cy="104.800" r="2.500" fill="#8a7a6a"/>
      <!-- row 3 -->
      <g transform="translate(4,112.500)"><rect width="53.500" height="22" fill="#3a98ee"/><rect x="25" y="5" width="12" height="17" rx="2" fill="#5aaaf4"/><rect x="40" y="2" width="11" height="20" rx="1.500" fill="#f2f6fc"/><rect x="5" y="8" width="12" height="2.200" fill="#dbeeff"/><rect x="5" y="13" width="6" height="1.600" fill="#bfe0ff"/></g>
      <g transform="translate(62.500,112.500)"><rect width="53.500" height="22" fill="#7764e6"/><rect x="3" y="14.500" width="47" height="7.500" fill="#17171b"/><rect x="13" y="5.500" width="27" height="1.800" fill="#efeaff"/><rect x="20" y="9" width="13" height="1.500" fill="#2a2060"/></g>
      <g transform="translate(121,112.500)"><rect width="53.500" height="22" fill="#fff"/><rect x="26" y="0" width="11" height="7" fill="#2d9a62"/><rect x="28" y="1.500" width="6" height="3" fill="#8a6a3a"/><rect x="40" y="0" width="11" height="11" fill="#7a8088"/><rect x="42" y="2" width="7" height="5" fill="#b9895a"/><rect x="28" y="9" width="9" height="5" fill="#33373f"/><rect x="40" y="14" width="11" height="8" fill="#eef0f6"/><rect x="28" y="17.500" width="9" height="2.500" fill="#7aa0f0"/><rect x="2" y="13.500" width="7" height="2.400" fill="#222"/><rect x="2" y="17.500" width="16" height=".8" fill="#bbb"/><path d="M2 1 h2.500 v4 h-2.500z" fill="#f24e1e"/><rect x="4" y="1" width="1.500" height="2" fill="#3d8bf0"/></g>
      <g transform="translate(179.500,112.500)"><rect width="53.500" height="22" fill="#0f0f11"/><rect x="0" y="0" width="53.500" height="6" fill="#3a1414" opacity=".6"/></g>
    </svg>
    <div class="abs" style="left:14px;top:36px;font-size:2.800px;line-height:3.200px;font-weight:700;color:#16203a;white-space:nowrap">Welcome to<br>Auto Layout!</div>
    <div class="abs" style="left:126px;top:39.500px;font-size:3.400px;line-height:4px;font-weight:700;color:#e8e8ec;white-space:nowrap">UI Checklist</div>
    <div class="abs" style="left:76px;top:116px;font-size:2.600px;line-height:3px;font-weight:700;color:#fff;white-space:nowrap;width:27px;text-align:center">Portfolio UI Design</div>
    <div class="abs" style="left:124px;top:122.500px;font-size:2.800px;line-height:3px;font-weight:700;color:#222;white-space:nowrap">iOS 16</div>
    <div class="abs" style="left:179.500px;top:123.500px;width:53.500px;text-align:center;font-size:4.400px;line-height:5px;font-weight:700;color:#f4f4f4;white-space:nowrap;letter-spacing:-.1px">SOCIAL MEDIA</div>
    <svg class="abs" style="left:204px;top:4px" width="30" height="26"><use href="#cam" width="30" height="26"/></svg>
  </div>
  <div class="cb"></div><div class="tm" style="letter-spacing:.34px">10:20 AM - 10:30 AM</div><div class="pc">63%</div>
</div>

<!-- card 5 -->
<div class="cd" style="left:1305px">
  <div class="im">
    <svg class="abs" style="left:0;top:0" width="238" height="142"><use href="#wp" width="238" height="142"/></svg>
    <div class="abs" style="left:38px;top:10px;width:161px;height:106px;background:#fff;box-shadow:0 2px 6px rgba(0,0,0,.4);overflow:hidden">
      <div class="abs" style="left:0;top:0;width:161px;height:6px;background:#35103a"></div>
      <div class="abs" style="left:0;top:6px;width:33px;height:101px;background:#3f1242"></div>
      <div class="abs" style="left:0;top:73px;width:33px;height:4.500px;background:#2b66ad"></div>
      <div class="abs" style="left:35px;top:2px;width:92px;height:2.500px;background:#5d3a62;border-radius:1px"></div>
      <svg class="abs" style="left:0;top:0" width="161" height="107">
        <circle cx="2.500" cy="3" r=".9" fill="#f0544a"/><circle cx="5.500" cy="3" r=".9" fill="#f0b23a"/><circle cx="8.500" cy="3" r=".9" fill="#3fc04a"/>
        <rect x="3" y="9" width="12" height="1.800" fill="#f0eaf2"/><circle cx="28.500" cy="10" r="2.600" fill="#f2eef4"/>
        <g fill="#c9b5cc"><rect x="4" y="17" width="9" height="1.200"/><rect x="4" y="21.500" width="8" height="1.200"/><rect x="4" y="25.500" width="22" height="1.200"/><rect x="4" y="30" width="13" height="1.200"/><rect x="4" y="34" width="13" height="1.200"/><rect x="4" y="38.500" width="6" height="1.200"/><rect x="4" y="44.500" width="10" height="1.200"/><rect x="6" y="49.500" width="12" height="1.200"/><rect x="6" y="53.500" width="19" height="1.200"/><rect x="6" y="57.500" width="21" height="1.200"/><rect x="6" y="62" width="16" height="1.200"/><rect x="6" y="66" width="10" height="1.200"/><rect x="6" y="70.500" width="19" height="1.200"/><rect x="6" y="79" width="10" height="1.200"/><rect x="6" y="83" width="3" height="1.200"/><rect x="6" y="87.500" width="6" height="1.200"/><rect x="6" y="91.500" width="8" height="1.200"/><rect x="6" y="95.500" width="6" height="1.200"/><rect x="4" y="102" width="10" height="1.200"/></g>
        <rect x="6" y="74.600" width="8" height="1.300" fill="#fff"/>
        <rect x="0" y="98" width="33" height=".6" fill="#c9a02a"/>
        <rect x="37" y="9" width="11" height="1.800" fill="#222"/><rect x="50.500" y="8.500" width="2.500" height="2.500" fill="#e8a83a"/>
        <rect x="37" y="15" width="16" height="1" fill="#aaa"/><rect x="33" y="18.500" width="128" height=".5" fill="#e8e8e8"/>
        <rect x="36.500" y="20" width="5" height="5" rx=".8" fill="#7a3a3a"/><rect x="43.500" y="20.500" width="23" height="1.400" fill="#222"/><rect x="43.500" y="23.500" width="14" height="1" fill="#999"/>
        <rect x="85" y="19.500" width="24" height="4" rx="1" fill="#fff" stroke="#ddd" stroke-width=".4"/><rect x="88" y="21" width="17" height="1" fill="#555"/>
        <rect x="145" y="8" width="8" height="3" fill="#7a6a4a"/>
        <!-- cat -->
        <g transform="translate(43.500,26.500)"><rect width="55.500" height="45" fill="#1c1c1e"/><rect x="0" y="0" width="8" height="30" fill="#0e0e10"/><rect x="50" y="8" width="5.500" height="32" fill="#2a4a88" opacity=".7"/>
          <path d="M20 22 C18 12 19 7 21 4 L25 8 H35 L39 4 C41 8 42 14 40 22 C41 26 41 28 41 30 H19 C19 28 19 26 20 22Z" fill="#e9e4da"/>
          <ellipse cx="28" cy="33" rx="19" ry="7.500" fill="#ecebe6"/><ellipse cx="24" cy="32" rx="8" ry="4.500" fill="#8a6a2a"/><circle cx="31" cy="29" r="2.500" fill="#5a4420"/><rect x="24" y="30" width="6" height="1" fill="#d8402a"/>
          <rect x="10" y="10" width="8" height=".9" fill="#bbb"/><rect x="38" y="11" width="8" height=".9" fill="#bbb"/>
        </g>
        <rect x="44" y="75" width="4" height="2" fill="#f0a030"/><rect x="51" y="75" width="4" height="2" fill="#e8b070"/><rect x="58" y="75" width="3" height="2" fill="#bbb"/>
        <rect x="43.500" y="79" width="3.500" height="3.500" fill="#444"/><rect x="48" y="79" width="3.500" height="3.500" fill="#222"/><rect x="53" y="80.200" width="6" height="1" fill="#3b6fd0"/><rect x="61" y="80.200" width="17" height="1" fill="#aaa"/>
        <rect x="36.500" y="86" width="121" height="5" fill="#f7f7f8"/><rect x="36.500" y="86" width="121" height="18" fill="none" stroke="#e4e4e6" stroke-width=".5"/>
        <rect x="39" y="94" width="19" height="1" fill="#aaa"/>
        <g fill="#777"><rect x="39" y="99.500" width="2" height="2"/><rect x="45" y="99.500" width="2.500" height="2"/><rect x="51" y="99.500" width="1.500" height="2"/><rect x="57" y="99.500" width="2" height="2"/><rect x="62" y="99.500" width="2" height="2"/><rect x="67" y="99.500" width="3" height="2"/><rect x="149" y="99.500" width="2.500" height="2"/></g>
      </svg>
    </div>
    <svg class="abs" style="left:63px;top:127px" width="112" height="9"><use href="#dock" width="112" height="9"/></svg>
    <svg class="abs" style="left:204px;top:4px" width="30" height="26"><use href="#cam" width="30" height="26"/></svg>
  </div>
  <div class="cb"></div><div class="tm" style="letter-spacing:.38px">10:30 AM - 10:40 AM</div><div class="pc">79%</div>
</div>

<div class="abs" style="left:274px;top:590px;width:1268px;height:1.500px;background:#e4e4e8"></div>
<div class="abs" style="left:862px;top:588px;width:94px;height:4px;border-radius:2px;background:#6a6bd9"></div>

<div id="dd">
  <div class="o s" style="top:4px">Leslie Alexander</div>
  <svg class="abs" style="left:206px;top:20px" width="14" height="12" viewBox="0 0 14 12" fill="none" stroke="#5558d9" stroke-width="2" stroke-linecap="round" stroke-linejoin="round"><path d="M2.2 6.600 L5.400 9.600 L11.800 2.400"/></svg>
  <div class="o" style="top:48px">Albert Flores</div>
  <div class="o h" style="top:92px">Floyd Miles</div>
  <div class="o" style="top:136px">Cody Fisher</div>
  <div class="o" style="top:180px">Jenny Wilson</div>
  <div class="o" style="top:224px">Jane Cooper</div>
  <div class="abs" style="left:235px;top:15px;width:2px;height:87px;background:#c3c4e6;border-radius:1px"></div>
  <svg class="abs" style="left:192px;top:120px" width="22" height="26" viewBox="0 0 22 26">
    <path d="M7.2 12.600 V4.200 C7.2 2.200 10.200 2.200 10.200 4.200 V9.400 C10.200 8 13 8.200 13 9.800 V10.400 C13 9.200 15.800 9.400 15.800 11 V11.800 C15.800 10.600 18.400 10.800 18.400 12.600 V17.200 C18.400 19.600 17.400 20.600 17 22.800 H9.400 C8.400 20.400 6.400 18.800 4.400 16 C3 14 5 12.600 6.400 14 Z" fill="#fff" stroke="#16151c" stroke-width="1.400" stroke-linejoin="round"/>
  </svg>
</div>

</body>
</html>
